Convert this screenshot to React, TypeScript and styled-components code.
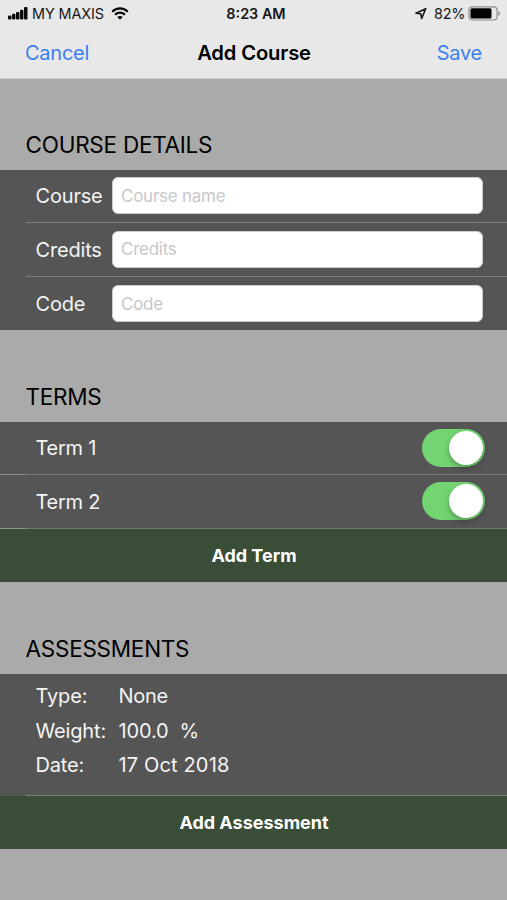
import React, { useState } from "react";
import styled, { createGlobalStyle } from "styled-components";

const GlobalStyle = createGlobalStyle`
  * { box-sizing: border-box; }
  body { margin: 0; background: #aaaaaa; }
`;

const Screen = styled.div`
  width: 507px;
  height: 900px;
  overflow: hidden;
  background: #aaaaaa;
  color: #000;
  font-family: Inter, "Liberation Sans", sans-serif;
  font-size: 20px;
`;

const Header = styled.header`
  height: 79px;
  background: #e8e8e8;
  border-bottom: 1px solid #cfcfcf;
`;

const StatusBar = styled.div`
  display: grid;
  grid-template-columns: 1fr auto 1fr;
  align-items: center;
  height: 27px;
  padding: 0 6px 0 8px;
  font-size: 14.4px;
  color: #161616;
`;

const StatusGroup = styled.div<{ $end?: boolean }>`
  display: flex;
  align-items: center;
  justify-content: ${(p) => (p.$end ? "flex-end" : "flex-start")};
`;

const Carrier = styled.span`
  margin: 0 7px 0 4px;
  letter-spacing: -0.08px;
`;

const Clock = styled.span`
  margin-left: 3px;
  font-weight: 600;
  font-size: 14.4px;
`;

const Percent = styled.span`
  margin: 0 3px 0 7px;
  letter-spacing: -0.3px;
`;

const NavBar = styled.nav`
  display: grid;
  grid-template-columns: 1fr auto 1fr;
  align-items: center;
  height: 51px;
  padding: 0 25px;
`;

const NavButton = styled.button<{ $end?: boolean }>`
  justify-self: ${(p) => (p.$end ? "end" : "start")};
  padding: 0;
  border: 0;
  background: none;
  color: #3c7ff0;
  font: inherit;
  letter-spacing: -0.25px;
`;

const NavTitle = styled.h1`
  margin: 0 0 0 1px;
  font-size: 20.2px;
  font-weight: 600;
  letter-spacing: -0.15px;
`;

const SectionTitle = styled.h2<{ $height: number }>`
  display: flex;
  align-items: flex-end;
  height: ${(p) => p.$height}px;
  margin: 0;
  padding: 0 26px 11px 25.5px;
  font-size: 22.5px;
  line-height: 28px;
  font-weight: 400;
  letter-spacing: -0.25px;
`;

const Table = styled.div`
  background: #555555;
`;

const Row = styled.div<{ $short?: boolean; $raised?: boolean }>`
  display: flex;
  align-items: center;
  height: ${(p) => (p.$short ? 53 : 54)}px;
  padding: 0 22px ${(p) => (p.$raised ? 1.5 : 0)}px 35.5px;
  color: #f4f4f4;
`;

const Separator = styled.div<{ $full?: boolean }>`
  height: 1px;
  margin: -1px 0 0 26px;
  background: #7d7d7d;
  ${(p) => p.$full && "margin-left: 0; background: linear-gradient(90deg, #929292 26px, #757575 26px);"}
`;

const FieldLabel = styled.label<{ $drop: number }>`
  width: 76.5px;
  padding-top: ${(p) => p.$drop}px;
  letter-spacing: -0.18px;
`;

const Field = styled.input`
  flex: 1;
  min-width: 0;
  height: 37px;
  margin-right: 2px;
  padding: 0 8px;
  border: 1px solid #cccccc;
  border-radius: 6px;
  background: #fff;
  font: 400 17px Inter, "Liberation Sans", sans-serif;
  letter-spacing: -0.25px;
  &::placeholder { color: #c7c7c9; opacity: 1; }
`;

const TermName = styled.span<{ $drop: number }>`
  flex: 1;
  padding-top: ${(p) => p.$drop}px;
  letter-spacing: -0.25px;
`;

const Toggle = styled.button<{ $on: boolean }>`
  display: flex;
  justify-content: ${(p) => (p.$on ? "flex-end" : "flex-start")};
  align-items: center;
  width: 63px;
  height: 38px;
  padding: 0 2px;
  border: 0;
  border-radius: 19px;
  background: ${(p) => (p.$on ? "#73d572" : "#8a8a8a")};
`;

const Knob = styled.span`
  width: 34px;
  height: 34px;
  border-radius: 50%;
  background: #fff;
  box-shadow: 0 3px 6px rgba(0, 0, 0, 0.28);
`;

const AddButton = styled.button`
  display: block;
  width: 100%;
  height: 53px;
  padding: 0 0 0 1px;
  border: 0;
  background: #3a4d37;
  color: #fff;
  font: 700 18px Inter, "Liberation Sans", sans-serif;
`;

const Details = styled.dl`
  display: grid;
  grid-template-columns: 83px 1fr;
  grid-auto-rows: 34.6px;
  align-items: center;
  height: 122px;
  margin: 0;
  padding: 5px 0 0 35.5px;
  color: #f4f4f4;
`;

const Term = styled.dt`
  letter-spacing: -0.15px;
`;

const Value = styled.dd<{ $spacing: number }>`
  margin: 0;
  white-space: pre;
  letter-spacing: ${(p) => p.$spacing}px;
`;

const SignalIcon = () => (
  <svg width="20" height="13" viewBox="0 0 20 13" fill="#080808">
    <rect x="0" y="8.5" width="3.4" height="4" rx="1.1" />
    <rect x="4" y="6.8" width="3.4" height="5.7" rx="1.1" />
    <rect x="8" y="5" width="3.4" height="7.5" rx="1.1" />
    <rect x="12" y="2.7" width="3.4" height="9.8" rx="1.1" />
    <rect x="16" y="0" width="3.5" height="12.5" rx="1.1" />
  </svg>
);

const WifiIcon = () => (
  <svg width="18" height="13" viewBox="0 0 18 13" fill="none" stroke="#080808" strokeWidth="2.2">
    <path d="M1.2 4.7C5.6.3 12.4.3 16.8 4.7" />
    <path d="M4 7.8c2.9-2.8 7.1-2.8 10 0" />
    <path d="M9 12.8 6.2 10c1.6-1.5 4-1.5 5.6 0Z" fill="#080808" stroke="none" />
  </svg>
);

const LocationIcon = () => (
  <svg width="12" height="13" viewBox="0 0 12 13" fill="none" stroke="#161616" strokeWidth="1.6" strokeLinejoin="round">
    <path d="M10.700 1.700 1 6.300l4.800.5.900 4.700Z" />
  </svg>
);

const BatteryIcon = () => (
  <svg width="33" height="15" viewBox="0 0 33 15">
    <rect x="1" y=".8" width="28" height="13.2" rx="3.2" fill="none" stroke="#8d8d8d" strokeWidth="1.2" />
    <rect x="2.5" y="2.3" width="21" height="10.2" rx="1.5" fill="#000" />
    <path d="M30.400 5v4.800c1-.4 1.700-1.300 1.700-2.400S31.400 5.400 30.400 5Z" fill="#8d8d8d" />
  </svg>
);

const fields = [
  { label: "Course", hint: "Course name" },
  { label: "Credits", hint: "Credits" },
  { label: "Code", hint: "Code" },
];

const details = [
  { name: "Type:", value: "None", spacing: -0.3 },
  { name: "Weight:", value: "100.0  %", spacing: -0.15 },
  { name: "Date:", value: "17 Oct 2018", spacing: 0.15 },
];

export default function App() {
  const [terms, setTerms] = useState([true, true]);
  return (
    <Screen>
      <GlobalStyle />
      <Header>
        <StatusBar>
          <StatusGroup>
            <SignalIcon />
            <Carrier>MY MAXIS</Carrier>
            <WifiIcon />
          </StatusGroup>
          <Clock>8:23 AM</Clock>
          <StatusGroup $end>
            <LocationIcon />
            <Percent>82%</Percent>
            <BatteryIcon />
          </StatusGroup>
        </StatusBar>
        <NavBar>
          <NavButton>Cancel</NavButton>
          <NavTitle>Add Course</NavTitle>
          <NavButton $end>Save</NavButton>
        </NavBar>
      </Header>

      <SectionTitle $height={91}>COURSE DETAILS</SectionTitle>
      <Table>
        {fields.map((f, i) => (
          <React.Fragment key={f.label}>
            {i > 0 && <Separator />}
            <Row $short={i !== 1} $raised={i < 2}>
              <FieldLabel htmlFor={f.label} $drop={i === 1 ? 2 : 0}>{f.label}</FieldLabel>
              <Field id={f.label} placeholder={f.hint} />
            </Row>
          </React.Fragment>
        ))}
      </Table>

      <SectionTitle $height={92}>TERMS</SectionTitle>
      <Table>
        {terms.map((on, i) => (
          <React.Fragment key={i}>
            <Row $short={i === 0} $raised>
              <TermName $drop={i === 1 ? 2 : 0}>Term {i + 1}</TermName>
              <Toggle
                $on={on}
                aria-label={`Term ${i + 1}`}
                onClick={() => setTerms(terms.map((t, n) => (n === i ? !t : t)))}
              >
                <Knob />
              </Toggle>
            </Row>
            <Separator $full />
          </React.Fragment>
        ))}
        <AddButton>Add Term</AddButton>
      </Table>

      <SectionTitle $height={92}>ASSESSMENTS</SectionTitle>
      <Table>
        <Details>
          {details.map((d) => (
            <React.Fragment key={d.name}>
              <Term>{d.name}</Term>
              <Value $spacing={d.spacing}>{d.value}</Value>
            </React.Fragment>
          ))}
        </Details>
        <Separator />
        <AddButton>Add Assessment</AddButton>
      </Table>
    </Screen>
  );
}
